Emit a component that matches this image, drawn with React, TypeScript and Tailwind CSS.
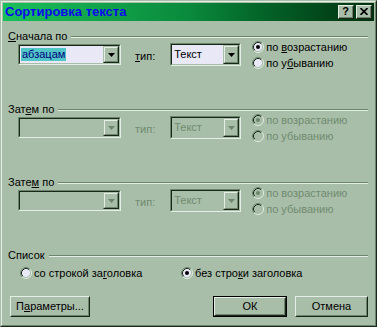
import React from 'react';

const Arrow = ({ color }: { color: string }) => (
  <svg width="7" height="4" viewBox="0 0 7 4">
    <polygon points="0,0 7,0 3.5,4" fill={color} />
  </svg>
);

function DropBtn({ disabled }: { disabled?: boolean }) {
  return (
    <div className="w-[16px] h-full shrink-0 bg-[#a9bea9] border border-t-[#a9bea9] border-l-[#a9bea9] border-r-[#1a261a] border-b-[#1a261a]">
      <div className="w-full h-full border border-t-[#e4eee4] border-l-[#e4eee4] border-r-[#6b866b] border-b-[#6b866b] flex items-center justify-center">
        <Arrow color={disabled ? '#6b866b' : '#000000'} />
      </div>
    </div>
  );
}

function Combo({
  cls,
  children,
  disabled,
}: {
  cls: string;
  children?: React.ReactNode;
  disabled?: boolean;
}) {
  return (
    <div className={`${cls} shrink-0 border border-t-[#6b866b] border-l-[#6b866b] border-r-[#e4eee4] border-b-[#e4eee4]`}>
      <div
        className={`w-full h-full border border-t-[#1a261a] border-l-[#1a261a] border-r-[#a9bea9] border-b-[#a9bea9] flex ${
          disabled ? 'bg-[#a9bea9] text-[#6f8b6f]' : 'bg-[#e8e8f6] text-black'
        }`}
      >
        <div className="flex-1 flex items-center pl-px overflow-hidden whitespace-nowrap">{children}</div>
        <DropBtn disabled={disabled} />
      </div>
    </div>
  );
}

function Radio({ checked, disabled }: { checked?: boolean; disabled?: boolean }) {
  return (
    <svg width="12" height="12" viewBox="0 0 12 12" className="shrink-0">
      <circle cx="6" cy="6" r="4.5" fill={disabled ? '#a9bea9' : '#e8e8f6'} />
      <path d="M 2.11 9.89 A 5.5 5.5 0 0 1 9.89 2.11" stroke="#6b866b" strokeWidth="1" fill="none" />
      <path d="M 9.89 2.11 A 5.5 5.5 0 0 1 2.11 9.89" stroke="#e4eee4" strokeWidth="1" fill="none" />
      <path d="M 2.82 9.18 A 4.5 4.5 0 0 1 9.18 2.82" stroke="#1a261a" strokeWidth="1" fill="none" />
      <path d="M 9.18 2.82 A 4.5 4.5 0 0 1 2.82 9.18" stroke="#a9bea9" strokeWidth="1" fill="none" />
      {checked && <circle cx="6" cy="6" r="2" fill={disabled ? '#6b866b' : '#000000'} />}
    </svg>
  );
}

function GroupLabel({ children }: { children: React.ReactNode }) {
  return (
    <div className="flex items-center h-[13px] leading-[13px]">
      <span className="whitespace-nowrap">{children}</span>
      <div className="flex-1 ml-[4px] h-[2px] border-t border-t-[#6b866b] border-b border-b-[#e4eee4]" />
    </div>
  );
}

function Button({
  cls,
  children,
  isDefault,
}: {
  cls: string;
  children: React.ReactNode;
  isDefault?: boolean;
}) {
  const inner = (
    <div className="w-full h-full bg-[#a9bea9] border border-t-[#e4eee4] border-l-[#e4eee4] border-r-[#1a261a] border-b-[#1a261a]">
      <div className="w-full h-full border border-t-[#a9bea9] border-l-[#a9bea9] border-r-[#6b866b] border-b-[#6b866b] flex items-center justify-center">
        {children}
      </div>
    </div>
  );
  if (isDefault) {
    return <div className={`${cls} shrink-0 border border-black`}>{inner}</div>;
  }
  return <div className={`${cls} shrink-0`}>{inner}</div>;
}

function SortSection({
  label,
  enabled,
}: {
  label: React.ReactNode;
  enabled?: boolean;
}) {
  const dis = !enabled;
  const gray = dis ? 'text-[#6f8b6f]' : 'text-black';
  return (
    <div className="h-[73px] flex flex-col">
      <GroupLabel>{label}</GroupLabel>
      <div className="flex items-start pl-[10px]">
        <Combo cls="w-[103px] h-[21px] mt-px" disabled={dis}>
          {enabled && <span className="bg-[#52c6c6] text-[#000080] leading-[13px] px-px">абзацам</span>}
        </Combo>
        <span className={`ml-[14px] mt-[5px] ${gray}`}>
          {enabled ? (
            <>
              <u>т</u>ип:
            </>
          ) : (
            'тип:'
          )}
        </span>
        <Combo cls="w-[71px] h-[23px] ml-[15px]" disabled={dis}>
          <span className="pl-px">Текст</span>
        </Combo>
        <div className={`ml-[11px] -mt-[4px] flex flex-col ${gray}`}>
          <div className="h-[16px] flex items-center gap-[2px]">
            <Radio checked disabled={dis} />
            <span>
              {enabled ? (
                <>
                  по <u>в</u>озрастанию
                </>
              ) : (
                'по возрастанию'
              )}
            </span>
          </div>
          <div className="h-[16px] flex items-center gap-[2px]">
            <Radio disabled={dis} />
            <span>
              {enabled ? (
                <>
                  по у<u>б</u>ыванию
                </>
              ) : (
                'по убыванию'
              )}
            </span>
          </div>
        </div>
      </div>
    </div>
  );
}

export default function App() {
  return (
    <div className="w-[377px] h-[327px] bg-[#a9bea9] border border-t-[#a9bea9] border-l-[#a9bea9] border-r-[#1a261a] border-b-[#1a261a] font-['Liberation_Sans',Arial,sans-serif] text-[11px] text-black">
      <div className="w-full h-full border border-t-[#e4eee4] border-l-[#e4eee4] border-r-[#6b866b] border-b-[#6b866b] p-px flex flex-col">
        {/* Title bar */}
        <div className="h-[18px] shrink-0 flex items-center bg-linear-to-r from-[#1ac05a] via-[#0a8a3c] to-[#00300e] pl-[2px] pr-[2px]">
          <span className="flex-1 text-[#0a0af0] font-bold text-[13px] leading-[18px] whitespace-nowrap">
            Сортировка текста
          </span>
          <div className="w-[16px] h-[14px] bg-[#a9bea9] border border-t-[#e4eee4] border-l-[#e4eee4] border-r-[#1a261a] border-b-[#1a261a]">
            <div className="w-full h-full border-r border-b border-r-[#6b866b] border-b-[#6b866b] flex items-center justify-center text-[11px] font-bold leading-none">
              ?
            </div>
          </div>
          <div className="ml-[2px] w-[16px] h-[14px] bg-[#a9bea9] border border-t-[#e4eee4] border-l-[#e4eee4] border-r-[#1a261a] border-b-[#1a261a]">
            <div className="w-full h-full border-r border-b border-r-[#6b866b] border-b-[#6b866b] flex items-center justify-center">
              <svg width="8" height="7" viewBox="0 0 8 7">
                <path d="M0.5 0 L7.5 7 M7.5 0 L0.5 7" stroke="#000" strokeWidth="1.6" />
              </svg>
            </div>
          </div>
        </div>

        {/* Content */}
        <div className="flex-1 flex flex-col pl-[5px] pr-[6px] pt-[9px]">
          <SortSection
            enabled
            label={
              <>
                <u>С</u>начала по
              </>
            }
          />
          <SortSection
            label={
              <>
                Зат<u>е</u>м по
              </>
            }
          />
          <SortSection
            label={
              <>
                Зате<u>м</u> по
              </>
            }
          />
          <div className="flex flex-col">
            <GroupLabel>Список</GroupLabel>
            <div className="flex items-center h-[16px] mt-[3px] pl-[12px]">
              <div className="flex items-center gap-[2px] w-[161px]">
                <Radio />
                <span>
                  со строкой за<u>г</u>оловка
                </span>
              </div>
              <div className="flex items-center gap-[2px]">
                <Radio checked />
                <span>
                  без стро<u>к</u>и заголовка
                </span>
              </div>
            </div>
          </div>
          <div className="mt-auto pb-[7px] flex items-end pl-[2px]">
            <Button cls="w-[80px] h-[21px]">
              <span>
                П<u>а</u>раметры...
              </span>
            </Button>
            <div className="flex-1" />
            <Button cls="w-[74px] h-[21px]" isDefault>
              <span>ОК</span>
            </Button>
            <Button cls="w-[73px] h-[21px] ml-[8px]">
              <span>Отмена</span>
            </Button>
          </div>
        </div>
      </div>
    </div>
  );
}
